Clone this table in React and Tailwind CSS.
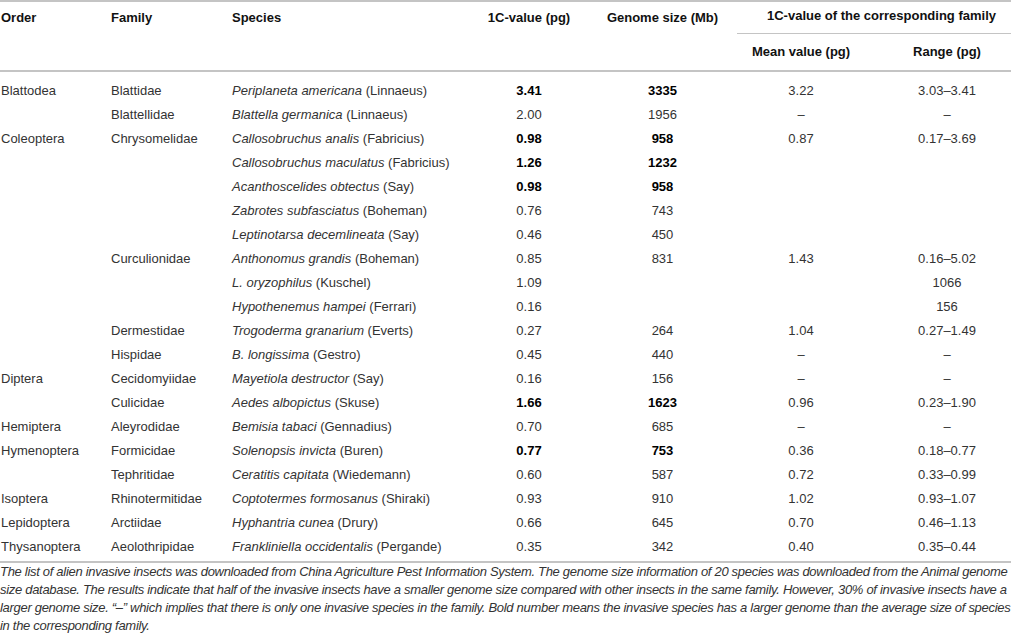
import React from "react";

const rows = [
  { order: "Blattodea", family: "Blattidae", genus: "Periplaneta americana", author: "(Linnaeus)", c: "3.41", size: "3335", bold: true, mean: "3.22", range: "3.03–3.41" },
  { order: "", family: "Blattellidae", genus: "Blattella germanica", author: "(Linnaeus)", c: "2.00", size: "1956", mean: "–", range: "–" },
  { order: "Coleoptera", family: "Chrysomelidae", genus: "Callosobruchus analis", author: "(Fabricius)", c: "0.98", size: "958", bold: true, mean: "0.87", range: "0.17–3.69" },
  { order: "", family: "", genus: "Callosobruchus maculatus", author: "(Fabricius)", c: "1.26", size: "1232", bold: true, mean: "", range: "" },
  { order: "", family: "", genus: "Acanthoscelides obtectus", author: "(Say)", c: "0.98", size: "958", bold: true, mean: "", range: "" },
  { order: "", family: "", genus: "Zabrotes subfasciatus", author: "(Boheman)", c: "0.76", size: "743", mean: "", range: "" },
  { order: "", family: "", genus: "Leptinotarsa decemlineata", author: "(Say)", c: "0.46", size: "450", mean: "", range: "" },
  { order: "", family: "Curculionidae", genus: "Anthonomus grandis", author: "(Boheman)", c: "0.85", size: "831", mean: "1.43", range: "0.16–5.02" },
  { order: "", family: "", genus: "L. oryzophilus", author: "(Kuschel)", c: "1.09", size: "", mean: "", range: "1066" },
  { order: "", family: "", genus: "Hypothenemus hampei", author: "(Ferrari)", c: "0.16", size: "", mean: "", range: "156" },
  { order: "", family: "Dermestidae", genus: "Trogoderma granarium", author: "(Everts)", c: "0.27", size: "264", mean: "1.04", range: "0.27–1.49" },
  { order: "", family: "Hispidae", genus: "B. longissima", author: "(Gestro)", c: "0.45", size: "440", mean: "–", range: "–" },
  { order: "Diptera", family: "Cecidomyiidae", genus: "Mayetiola destructor", author: "(Say)", c: "0.16", size: "156", mean: "–", range: "–" },
  { order: "", family: "Culicidae", genus: "Aedes albopictus", author: "(Skuse)", c: "1.66", size: "1623", bold: true, mean: "0.96", range: "0.23–1.90" },
  { order: "Hemiptera", family: "Aleyrodidae", genus: "Bemisia tabaci", author: "(Gennadius)", c: "0.70", size: "685", mean: "–", range: "–" },
  { order: "Hymenoptera", family: "Formicidae", genus: "Solenopsis invicta", author: "(Buren)", c: "0.77", size: "753", bold: true, mean: "0.36", range: "0.18–0.77" },
  { order: "", family: "Tephritidae", genus: "Ceratitis capitata", author: "(Wiedemann)", c: "0.60", size: "587", mean: "0.72", range: "0.33–0.99" },
  { order: "Isoptera", family: "Rhinotermitidae", genus: "Coptotermes formosanus", author: "(Shiraki)", c: "0.93", size: "910", mean: "1.02", range: "0.93–1.07" },
  { order: "Lepidoptera", family: "Arctiidae", genus: "Hyphantria cunea", author: "(Drury)", c: "0.66", size: "645", mean: "0.70", range: "0.46–1.13" },
  { order: "Thysanoptera", family: "Aeolothripidae", genus: "Frankliniella occidentalis", author: "(Pergande)", c: "0.35", size: "342", mean: "0.40", range: "0.35–0.44" },
];

const caption = [
  "The list of alien invasive insects was downloaded from China Agriculture Pest Information System. The genome size information of 20 species was downloaded from the Animal genome",
  "size database. The results indicate that half of the invasive insects have a smaller genome size compared with other insects in the same family. However, 30% of invasive insects have a",
  "larger genome size. “–” which implies that there is only one invasive species in the family. Bold number means the invasive species has a larger genome than the average size of species",
  "in the corresponding family.",
];

const App = () => {
  return (
    <div className="w-[1011px] bg-white text-[13px] text-[#333] font-['Liberation_Sans',Arial,sans-serif]">
      <table className="w-[1011px] table-fixed border-collapse border-t-2 border-[#c4c4c4]">
        <colgroup>
          <col className="w-[111px]" />
          <col className="w-[121px]" />
          <col className="w-[238px]" />
          <col className="w-[118px]" />
          <col className="w-[149px]" />
          <col className="w-[128px]" />
          <col className="w-[146px]" />
        </colgroup>
        <thead className="text-[#111] font-bold">
          <tr>
            <th rowSpan={2} className="align-top text-left pl-px pt-[8px] border-b-2 border-[#c4c4c4] leading-[16px]">Order</th>
            <th rowSpan={2} className="align-top text-left pt-[8px] border-b-2 border-[#c4c4c4] leading-[16px]">Family</th>
            <th rowSpan={2} className="align-top text-left pt-[8px] border-b-2 border-[#c4c4c4] leading-[16px]">Species</th>
            <th rowSpan={2} className="align-top text-center pt-[8px] border-b-2 border-[#c4c4c4] leading-[16px]">1C-value (pg)</th>
            <th rowSpan={2} className="align-top text-center pt-[8px] border-b-2 border-[#c4c4c4] leading-[16px]">Genome size (Mb)</th>
            <th colSpan={2} className="h-[32px] pl-[15px] pb-[2px] text-center border-b border-[#c4c4c4] leading-[16px]">
              1C-value of the corresponding family
            </th>
          </tr>
          <tr>
            <th className="h-[38px] text-center border-b-2 border-[#c4c4c4] leading-[16px]">Mean value (pg)</th>
            <th className="h-[38px] text-center pl-[18px] border-b-2 border-[#c4c4c4] leading-[16px]">Range (pg)</th>
          </tr>
        </thead>
        <tbody>
          {rows.map((row, i) => {
            const pad = i === 0 ? "pt-[7px]" : i === rows.length - 1 ? "pb-[2px]" : "";
            return (
              <tr key={i} className="leading-6">
                <td className={`pl-px ${pad}`}>{row.order}</td>
                <td className={pad}>{row.family}</td>
                <td className={`whitespace-nowrap ${pad}`}>
                  <i>{row.genus}</i> {row.author}
                </td>
                <td className={`text-center ${row.bold ? "font-bold text-black" : ""} ${pad}`}>{row.c}</td>
                <td className={`text-center ${row.bold ? "font-bold text-black" : ""} ${pad}`}>{row.size}</td>
                <td className={`text-center ${pad}`}>{row.mean}</td>
                <td className={`text-center pl-[18px] ${pad}`}>{row.range}</td>
              </tr>
            );
          })}
        </tbody>
      </table>
      <div className="border-t-2 border-[#c4c4c4] italic leading-[18px] text-[#333] tracking-[-0.3px]">
        {caption.map((line, i) => (
          <div key={i} className="whitespace-nowrap">{line}</div>
        ))}
      </div>
    </div>
  );
};

export default App;
